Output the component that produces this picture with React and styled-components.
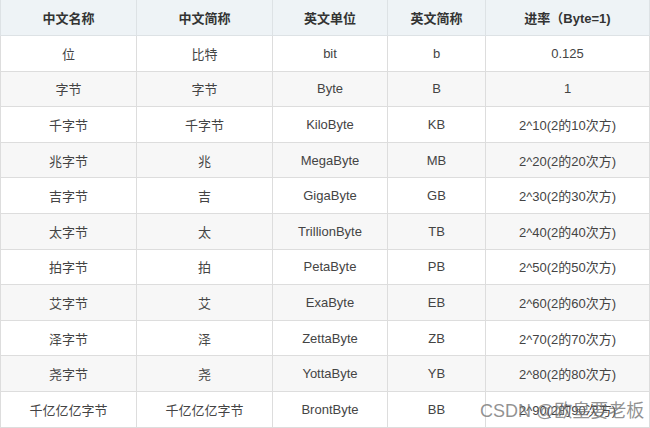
import React from "react";
import styled, { createGlobalStyle } from "styled-components";

const rows = [
  ["位", "比特", "bit", "b", "0.125"],
  ["字节", "字节", "Byte", "B", "1"],
  ["千字节", "千字节", "KiloByte", "KB", "2^10(2的10次方)"],
  ["兆字节", "兆", "MegaByte", "MB", "2^20(2的20次方)"],
  ["吉字节", "吉", "GigaByte", "GB", "2^30(2的30次方)"],
  ["太字节", "太", "TrillionByte", "TB", "2^40(2的40次方)"],
  ["拍字节", "拍", "PetaByte", "PB", "2^50(2的50次方)"],
  ["艾字节", "艾", "ExaByte", "EB", "2^60(2的60次方)"],
  ["泽字节", "泽", "ZettaByte", "ZB", "2^70(2的70次方)"],
  ["尧字节", "尧", "YottaByte", "YB", "2^80(2的80次方)"],
  ["千亿亿亿字节", "千亿亿亿字节", "BrontByte", "BB", "2^90(2的90次方)"],
];

const heads = ["中文名称", "中文简称", "英文单位", "英文简称", "进率（Byte=1)"];
const widths = [136, 136, 115, 98, 164];

const GlobalStyle = createGlobalStyle`
  body {
    margin: 0;
    background: #fff;
    font-family: "Liberation Sans", "Noto Sans CJK SC", sans-serif;
  }
`;

const Wrap = styled.div`
  position: relative;
  width: 650px;
  height: 428px;
  overflow: hidden;
`;

const Table = styled.table`
  border-collapse: collapse;
  table-layout: fixed;
  width: 649px;
  font-size: 13px;
  color: #444;
`;

const HeadCell = styled.th`
  height: 35px;
  padding: 0;
  background: #eef3f6;
  border: 1px solid #dde2e5;
  border-top: none;
  font-weight: bold;
  color: #333;
  text-align: center;
`;

const Row = styled.tr`
  background: ${(p) => (p.$striped ? "#f7f7f7" : "#fff")};
`;

const Cell = styled.td`
  height: 34.6px;
  padding: 0;
  border: 1px solid #dddddd;
  text-align: center;
`;

// CSDN watermark lies over the last cell
const Watermark = styled.div`
  position: absolute;
  left: 480px;
  top: 398px;
  font-size: 18px;
  line-height: 26px;
  color: rgba(110, 110, 110, 0.75);
  white-space: nowrap;
  font-family: "Liberation Sans", "Noto Sans CJK SC", sans-serif;
`;

export default function App() {
  return (
    <Wrap>
      <GlobalStyle />
      <Table>
        <colgroup>
          {widths.map((w, i) => (
            <col key={i} style={{ width: w }} />
          ))}
        </colgroup>
        <thead>
          <tr>
            {heads.map((h) => (
              <HeadCell key={h}>{h}</HeadCell>
            ))}
          </tr>
        </thead>
        <tbody>
          {rows.map((r, i) => (
            <Row key={i} $striped={i % 2 === 1}>
              {r.map((c, j) => (
                <Cell key={j}>{c}</Cell>
              ))}
            </Row>
          ))}
        </tbody>
      </Table>
      <Watermark>CSDN @欧皇要老板</Watermark>
    </Wrap>
  );
}
